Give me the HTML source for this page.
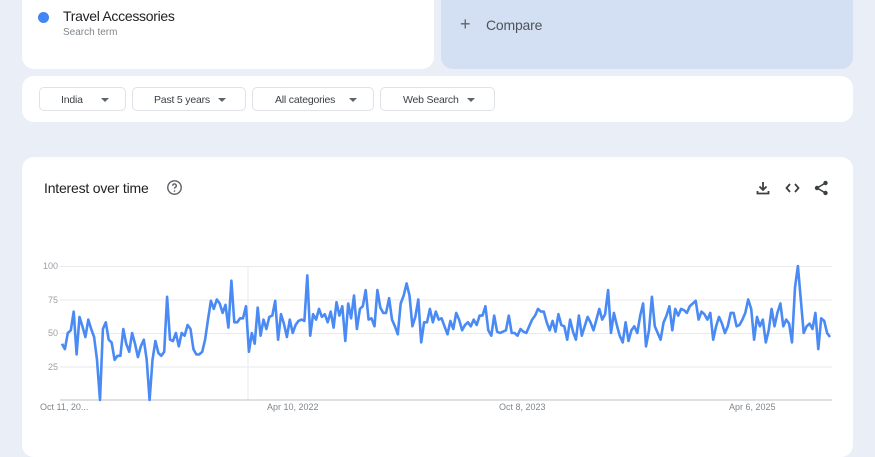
<!DOCTYPE html>
<html><head><meta charset="utf-8"><style>
body{margin:0;width:875px;height:438px;background:#e9eef7;font-family:"Liberation Sans",sans-serif;position:relative;overflow:hidden}
.card{position:absolute;background:#fff;border-radius:12px}
.dd{position:absolute;top:87px;height:24px;border:1px solid #dfe2e6;border-radius:5px;font-size:10.5px;color:#3c4043;line-height:24px;box-sizing:border-box;letter-spacing:-0.2px}
.dd span{position:absolute;top:0}
.tri{position:absolute;top:10px;width:0;height:0;border-left:4px solid transparent;border-right:4px solid transparent;border-top:4px solid #5f6368}
.yl{position:absolute;left:30px;width:28px;text-align:right;font-size:9px;color:#9aa0a6}
.xl{position:absolute;top:402px;font-size:9px;color:#80868b}
</style></head><body>
<div class="card" style="left:22px;top:-20px;width:412px;height:89px"></div>
<div style="position:absolute;left:38px;top:12px;width:11px;height:11px;border-radius:50%;background:#4285f4"></div>
<div style="position:absolute;left:63px;top:8px;font-size:14px;color:#202124;letter-spacing:-0.3px">Travel Accessories</div>
<div style="position:absolute;left:63px;top:27px;font-size:10px;color:#80868b">Search term</div>
<div style="position:absolute;left:441px;top:-20px;width:412px;height:89px;background:#d3e0f4;border-radius:12px"></div>
<div style="position:absolute;left:460px;top:14px;font-size:18px;color:#5f6368;font-weight:300">+</div>
<div style="position:absolute;left:486px;top:17px;font-size:14px;color:#4f5358;letter-spacing:-0.2px">Compare</div>
<div class="card" style="left:22px;top:76px;width:831px;height:46px"></div>
<div class="dd" style="left:39px;width:87px"><span style="left:21px">India</span><i class="tri" style="left:61px"></i></div>
<div class="dd" style="left:132px;width:114px"><span style="left:21px">Past 5 years</span><i class="tri" style="left:85px"></i></div>
<div class="dd" style="left:252px;width:122px"><span style="left:22px">All categories</span><i class="tri" style="left:96px"></i></div>
<div class="dd" style="left:380px;width:115px"><span style="left:22px">Web Search</span><i class="tri" style="left:86px"></i></div>
<div class="card" style="left:22px;top:157px;width:831px;height:300px"></div>
<div style="position:absolute;left:44px;top:180px;font-size:14px;color:#202124;letter-spacing:-0.2px">Interest over time</div>
<svg style="position:absolute;left:166px;top:179px" width="17" height="17" viewBox="0 0 24 24"><circle cx="12" cy="12" r="9.5" fill="none" stroke="#5f6368" stroke-width="2"/><path d="M9.5 9.5a2.5 2.5 0 1 1 3.5 2.3c-.7.4-1 .9-1 1.7" fill="none" stroke="#5f6368" stroke-width="2"/><circle cx="12" cy="17" r="1.2" fill="#5f6368"/></svg>
<svg style="position:absolute;left:756px;top:181px" width="14" height="14" viewBox="0 0 14 14"><path d="M7 1v8M3.5 5.5L7 9l3.5-3.5M1.5 10v2.5h11V10" fill="none" stroke="#3c4043" stroke-width="1.8"/></svg>
<svg style="position:absolute;left:785px;top:182px" width="15" height="12" viewBox="0 0 15 12"><path d="M5 2L1.5 6 5 10M10 2l3.5 4L10 10" fill="none" stroke="#3c4043" stroke-width="1.8"/></svg>
<svg style="position:absolute;left:814px;top:180px" width="15" height="16" viewBox="0 0 15 16"><circle cx="11.5" cy="3" r="2.2" fill="#3c4043"/><circle cx="3" cy="8" r="2.2" fill="#3c4043"/><circle cx="11.5" cy="13" r="2.2" fill="#3c4043"/><path d="M11.5 3L3 8l8.5 5" fill="none" stroke="#3c4043" stroke-width="1.5"/></svg>
<div class="yl" style="top:261px">100</div><div class="yl" style="top:295px">75</div><div class="yl" style="top:328px">50</div><div class="yl" style="top:362px">25</div>
<div class="xl" style="left:40px">Oct 11, 20...</div><div class="xl" style="left:267px">Apr 10, 2022</div><div class="xl" style="left:499px">Oct 8, 2023</div><div class="xl" style="left:729px">Apr 6, 2025</div>
<svg id="ch" style="position:absolute;left:0;top:0" width="875" height="438">
<g stroke="#e8eaed" stroke-width="1"><line x1="60" x2="832" y1="266.5" y2="266.5"/><line x1="60" x2="832" y1="300" y2="300"/><line x1="60" x2="832" y1="333.5" y2="333.5"/><line x1="60" x2="832" y1="367" y2="367"/><line x1="248" x2="248" y1="266" y2="400"/></g>
<line x1="60" x2="832" y1="400" y2="400" stroke="#bdc1c6"/>
<polyline id="pl" fill="none" stroke="#4a8af4" stroke-width="2.6" stroke-linejoin="round"/>
</svg>
<script>
var v=[42,38,50,52,66,34,62,55,47,60,53,47,30,0,53,58,45,43,30,33,33,53,42,36,50,42,32,40,45,30,0,30,44,35,33,36,77,45,44,50,40,50,48,56,53,38,34,34,36,45,60,74,68,75,72,65,71,54,89,58,58,61,61,70,36,50,42,69,48,60,53,62,63,74,45,64,57,47,60,50,56,59,60,59,93,48,64,60,68,62,64,58,66,54,73,63,70,44,72,61,78,53,68,70,82,60,61,55,82,69,65,65,76,60,55,49,72,78,87,78,55,62,75,43,58,58,68,58,66,60,61,55,49,59,53,65,60,52,56,58,55,60,56,63,63,70,52,48,63,51,50,51,52,63,50,50,48,53,51,50,55,60,63,68,66,66,58,52,59,51,64,56,55,45,60,51,45,63,48,55,62,58,52,60,68,60,64,82,50,65,56,48,43,58,44,52,55,50,63,72,40,52,77,55,50,45,58,63,70,52,68,63,68,67,65,70,72,74,60,66,64,60,65,45,55,62,57,50,55,65,65,55,56,60,65,75,68,45,62,55,60,43,52,68,55,65,72,55,60,57,43,84,100,75,50,55,57,53,65,38,61,59,50,47];
var p=[],n=v.length;for(var i=0;i<n;i++){p.push((62+i*(830-62)/(n-1)).toFixed(1)+","+(400-v[i]*1.34).toFixed(1));}
document.getElementById("pl").setAttribute("points",p.join(" "));
</script>
</body></html>
